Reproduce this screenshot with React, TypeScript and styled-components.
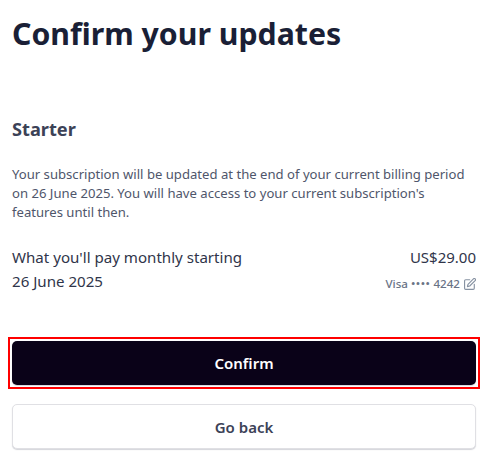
import React from 'react';
import styled, { createGlobalStyle } from 'styled-components';

const Global = createGlobalStyle`
  html, body { margin: 0; padding: 0; background: #fff; }
  body { font-family: "Noto Sans", "Open Sans", sans-serif; }
`;

const Page = styled.main`
  width: 489px;
  height: 462px;
  box-sizing: border-box;
  padding: 12px 13px 0 12px;
  overflow: hidden;
`;

const Title = styled.h1`
  margin: 0;
  font-size: 30.25px;
  line-height: 44px;
  font-weight: 700;
  color: #1a1f36;
`;

const PlanName = styled.h2`
  margin: 60px 0 0;
  font-size: 18.2px;
  line-height: 26px;
  font-weight: 700;
  color: #3c4257;
`;

const Notice = styled.p`
  margin: 23px 0 0;
  font-size: 13.12px;
  line-height: 19px;
  color: #4f566b;
`;

const Summary = styled.section`
  display: flex;
  justify-content: space-between;
  align-items: flex-start;
  margin-top: 23px;
`;

const SummaryLabel = styled.div`
  width: 240px;
  font-size: 15.1px;
  line-height: 24px;
  color: #30354a;
`;

const SummaryRight = styled.div`
  display: flex;
  flex-direction: column;
  align-items: flex-end;
`;

const Amount = styled.div`
  font-size: 15px;
  line-height: 24px;
  color: #30354a;
`;

const CardLine = styled.div`
  display: flex;
  align-items: center;
  gap: 4px;
  margin-top: 6px;
  font-size: 11.6px;
  line-height: 18px;
  font-weight: 500;
  color: #697386;
`;

const Dots = styled.span`
  letter-spacing: 0.5px;
`;

const Button = styled.button<{ $primary?: boolean }>`
  display: block;
  width: 100%;
  height: ${(p) => (p.$primary ? '44px' : '45px')};
  box-sizing: border-box;
  border-radius: 5px;
  font-family: inherit;
  font-size: 15px;
  font-weight: 600;
  cursor: pointer;
  background: ${(p) => (p.$primary ? '#0a0218' : '#fff')};
  color: ${(p) => (p.$primary ? '#fff' : '#3c4257')};
  border: ${(p) => (p.$primary ? '0' : '1px solid #e0e0e4')};
  box-shadow: 0 1px 1px rgba(60, 66, 87, 0.22);
`;

const Actions = styled.div`
  display: flex;
  flex-direction: column;
  gap: 15px;
  margin-top: 44px;
`;

const FocusRing = styled.div`
  margin: 0 -4px;
  padding: 2px;
  border: 2px solid #f00;
`;

const EditIcon = () => (
  <svg width="12" height="12" viewBox="2 1 21 21" fill="none" stroke="#8792a2" strokeWidth="2" strokeLinecap="round" strokeLinejoin="round" aria-hidden="true">
    <path d="M12 4H5a2 2 0 0 0-2 2v13a2 2 0 0 0 2 2h13a2 2 0 0 0 2-2v-7" />
    <path d="M18.5 2.5a2.1 2.1 0 0 1 3 3L12 15l-4 1 1-4z" />
  </svg>
);

export default function App() {
  return (
    <Page>
      <Global />
      <Title>Confirm your updates</Title>
      <PlanName>Starter</PlanName>
      <Notice>
        Your subscription will be updated at the end of your current billing period on 26 June 2025. You will have access to your current subscription's features until then.
      </Notice>
      <Summary>
        <SummaryLabel>What you'll pay monthly starting 26 June 2025</SummaryLabel>
        <SummaryRight>
          <Amount>US$29.00</Amount>
          <CardLine>
            <span>
              Visa <Dots>••••</Dots> 4242
            </span>
            <EditIcon />
          </CardLine>
        </SummaryRight>
      </Summary>
      <Actions>
        <FocusRing>
          <Button $primary>Confirm</Button>
        </FocusRing>
        <Button>Go back</Button>
      </Actions>
    </Page>
  );
}
